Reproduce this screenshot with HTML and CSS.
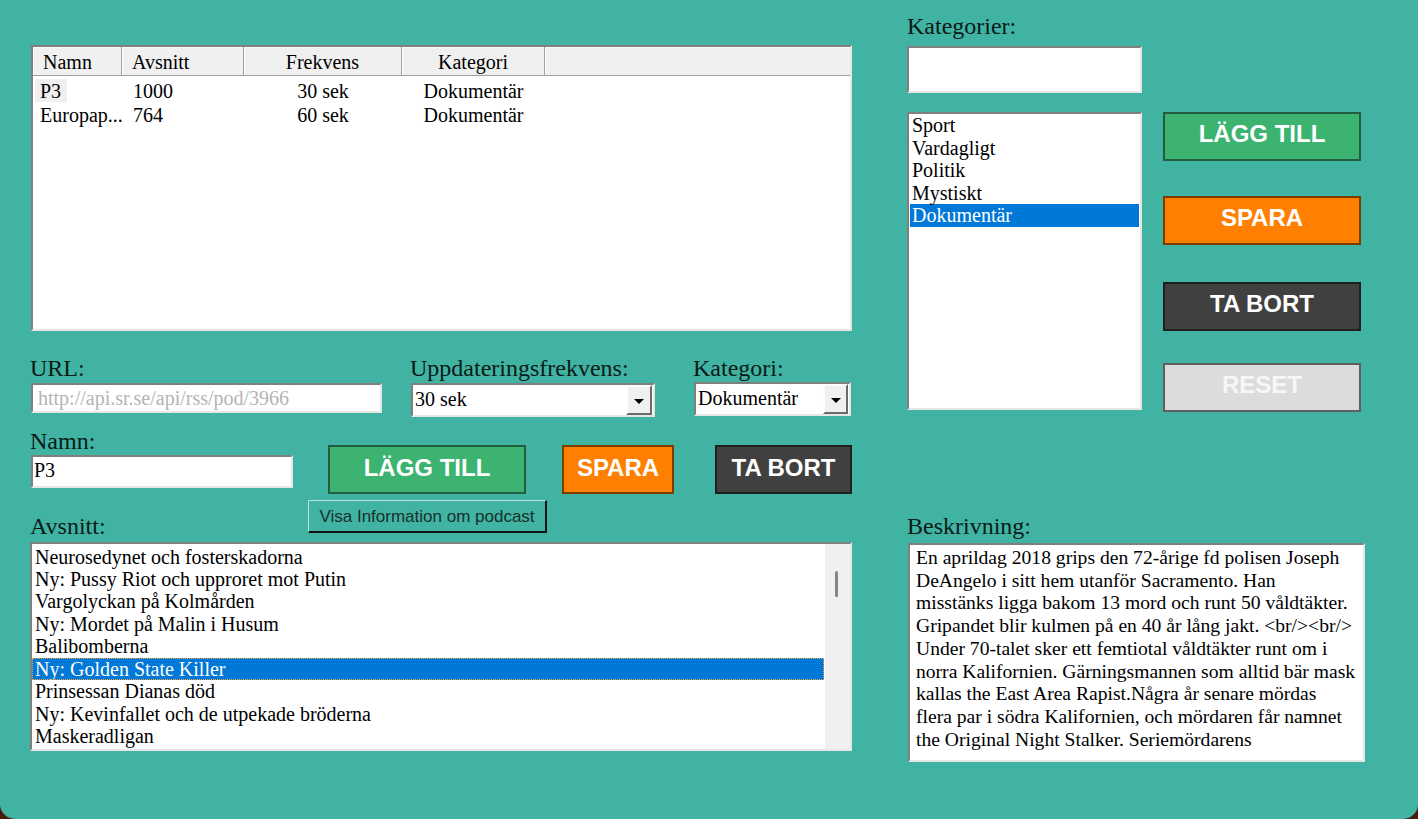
FILE: index.html
```html
<!DOCTYPE html>
<html lang="sv">
<head>
<meta charset="utf-8">
<title>Podcast</title>
<link rel="stylesheet" href="styles.css">
</head>
<body>
<div class="window">
  <div class="left">
    <div class="listview">
      <div class="lv-header">
        <div class="lv-col c-namn">Namn</div>
        <div class="lv-col c-avs">Avsnitt</div>
        <div class="lv-col c-frek center">Frekvens</div>
        <div class="lv-col c-kat center">Kategori</div>
        <div class="lv-col c-rest"></div>
      </div>
      <div class="lv-rows">
        <div class="lv-row">
          <div class="lv-cell c-namn"><span class="focus">P3</span></div>
          <div class="lv-cell c-avs">1000</div>
          <div class="lv-cell c-frek center">30 sek</div>
          <div class="lv-cell c-kat center">Dokumentär</div>
        </div>
        <div class="lv-row">
          <div class="lv-cell c-namn"><span class="plain">Europap...</span></div>
          <div class="lv-cell c-avs">764</div>
          <div class="lv-cell c-frek center">60 sek</div>
          <div class="lv-cell c-kat center">Dokumentär</div>
        </div>
      </div>
    </div>

    <div class="fields">
      <div class="field f-url">
        <div class="lbl">URL:</div>
        <div class="textbox tb-url"><span class="placeholder">http://api.sr.se/api/rss/pod/3966</span></div>
      </div>
      <div class="field f-freq">
        <div class="lbl">Uppdateringsfrekvens:</div>
        <div class="combo combo-freq"><span class="combo-text">30 sek</span><span class="combo-btn"><span class="tri"></span></span></div>
      </div>
      <div class="field f-kat">
        <div class="lbl">Kategori:</div>
        <div class="combo combo-kat"><span class="combo-text">Dokumentär</span><span class="combo-btn"><span class="tri"></span></span></div>
      </div>
    </div>

    <div class="row2">
      <div class="field f-namn">
        <div class="lbl">Namn:</div>
        <div class="textbox tb-namn">P3</div>
      </div>
      <button class="btn btn-green b-lagg">LÄGG TILL</button>
      <button class="btn btn-orange b-spara">SPARA</button>
      <button class="btn btn-dark b-tabort">TA BORT</button>
    </div>

    <div class="row3">
      <div class="lbl lbl-avsnitt">Avsnitt:</div>
      <button class="visa">Visa Information om podcast</button>
    </div>

    <div class="listbox lb-avsnitt">
      <div class="lb-items">
        <div class="item">Neurosedynet och fosterskadorna</div>
        <div class="item">Ny: Pussy Riot och upproret mot Putin</div>
        <div class="item">Vargolyckan på Kolmården</div>
        <div class="item">Ny: Mordet på Malin i Husum</div>
        <div class="item">Balibomberna</div>
        <div class="item selected focused">Ny: Golden State Killer</div>
        <div class="item">Prinsessan Dianas död</div>
        <div class="item">Ny: Kevinfallet och de utpekade bröderna</div>
        <div class="item">Maskeradligan</div>
      </div>
      <div class="scrollbar"><div class="thumb"></div></div>
    </div>
  </div>

  <div class="right">
    <div class="lbl lbl-kategorier">Kategorier:</div>
    <div class="textbox tb-kat"></div>
    <div class="cat-row">
      <div class="listbox lb-cat">
        <div class="item">Sport</div>
        <div class="item">Vardagligt</div>
        <div class="item">Politik</div>
        <div class="item">Mystiskt</div>
        <div class="item selected">Dokumentär</div>
      </div>
      <div class="cat-buttons">
        <button class="btn btn-green rb rb-lagg">LÄGG TILL</button>
        <button class="btn btn-orange rb rb-spara">SPARA</button>
        <button class="btn btn-dark rb rb-tabort">TA BORT</button>
        <button class="btn btn-reset rb rb-reset">RESET</button>
      </div>
    </div>
    <div class="lbl lbl-besk">Beskrivning:</div>
    <div class="textbox desc">En aprildag 2018 grips den 72-årige fd polisen Joseph<br>DeAngelo i sitt hem utanför Sacramento. Han<br>misstänks ligga bakom 13 mord och runt 50 våldtäkter.<br>Gripandet blir kulmen på en 40 år lång jakt. &lt;br/&gt;&lt;br/&gt;<br>Under 70-talet sker ett femtiotal våldtäkter runt om i<br>norra Kalifornien. Gärningsmannen som alltid bär mask<br>kallas the East Area Rapist.Några år senare mördas<br>flera par i södra Kalifornien, och mördaren får namnet<br>the Original Night Stalker. Seriemördarens</div>
  </div>
</div>
</body>
</html>
```

FILE: styles.css
```css
* { box-sizing: border-box; }

html { background: #4a1a0c; }

body { margin: 0; }

.window {
  width: 1418px;
  height: 819px;
  background: #41b3a3;
  border-radius: 0 0 15px 15px;
  display: flex;
  font-family: "Liberation Serif", "Times New Roman", serif;
  color: #000;
  overflow: hidden;
}

/* ---------- generic controls ---------- */
.lbl {
  font-size: 24px;
  line-height: 28px;
  height: 28px;
  color: #0a1a17;
  white-space: nowrap;
}

.textbox {
  background: #fff;
  border: 2px solid;
  border-color: #7f7f7f #e6e6e6 #e6e6e6 #7f7f7f;
  font-size: 20px;
  overflow: hidden;
  white-space: nowrap;
}

.listbox {
  background: #fff;
  border: 2px solid;
  border-color: #7f7f7f #e6e6e6 #e6e6e6 #7f7f7f;
  font-size: 20px;
  overflow: hidden;
}

.item {
  height: 22.45px;
  line-height: 22.45px;
  padding-left: 3px;
  white-space: nowrap;
}

.item.selected {
  background: #0078d7;
  color: #fff;
}

.btn {
  display: block;
  margin: 0;
  padding: 0 0 4px 0;
  height: 49px;
  font-family: "Liberation Sans", Arial, sans-serif;
  font-weight: bold;
  font-size: 24px;
  color: #fff;
  border: 2px solid;
  text-align: center;
  line-height: 28px;
}

.btn-green { background: #3cb371; border-color: #245c3f; }
.btn-orange { background: #ff8000; border-color: #7a3d00; }
.btn-dark { background: #404040; border-color: #1f1f1f; }
.btn-reset { background: #dcdcdc; border-color: #5f5f5f; color: #f7f7f7; }

/* ---------- left column ---------- */
.left {
  margin-left: 30px;
  width: 823px;
  display: flex;
  flex-direction: column;
}

.listview {
  margin-top: 45px;
  margin-left: 1px;
  width: 821px;
  height: 286px;
  background: #fff;
  border: 2px solid;
  border-color: #7f7f7f #e6e6e6 #e6e6e6 #7f7f7f;
  font-size: 20px;
}

.lv-header {
  display: flex;
  height: 29px;
  background: #f0f0f0;
  border-bottom: 1px solid #a0a0a0;
}

.lv-col {
  height: 28px;
  padding-top: 3px;
  padding-left: 10px;
  line-height: 24px;
  border-right: 1px solid #a0a0a0;
  box-shadow: inset 1px 1px 0 #fff;
  white-space: nowrap;
}

.lv-col.center { padding-left: 0; text-align: center; }

.c-namn { width: 89px; }
.c-avs { width: 122px; }
.c-frek { width: 158px; }
.c-kat { width: 143px; }
.c-rest { flex: 1; border-right: 0; }

.lv-rows { padding-top: 3px; }

.lv-row {
  display: flex;
  height: 24px;
  line-height: 24px;
  white-space: nowrap;
}

.lv-cell { overflow: hidden; }
.lv-cell.c-namn { padding-left: 2px; }
.lv-cell.c-avs { padding-left: 11px; }
.lv-cell.center { text-align: center; }

.focus {
  display: inline-block;
  background: #efefef;
  padding: 0 6px 0 5px;
  height: 23px;
}

.plain { padding-left: 5px; }

.fields {
  display: flex;
  margin-top: 23px;
  height: 63px;
}

.field { display: flex; flex-direction: column; }

.f-url { width: 380px; }
.f-freq { width: 283px; }
.f-kat { width: 160px; }

.tb-url {
  margin-top: 1px;
  margin-left: 1px;
  width: 351px;
  height: 30px;
  line-height: 26px;
  padding-left: 5px;
}

.placeholder { color: #b4b4b4; }

.combo {
  display: flex;
  background: #fff;
  border: 2px solid;
  border-color: #7f7f7f #e6e6e6 #e6e6e6 #7f7f7f;
  height: 34px;
  padding-right: 1px;
  font-size: 20px;
}

.combo-freq { margin-top: 1px; margin-left: 1px; width: 244px; }
.combo-kat { margin-left: 1px; width: 157px; }

.combo-text {
  flex: 1;
  padding-left: 2px;
  line-height: 28px;
  white-space: nowrap;
  overflow: hidden;
}

.combo-btn {
  width: 26px;
  background: #f0f0f0;
  border: 2px solid;
  border-color: #fdfdfd #6a6a6a #6a6a6a #fdfdfd;
  display: flex;
  align-items: center;
  justify-content: center;
}

.combo-kat .combo-btn { width: 25px; }

.tri {
  width: 0;
  height: 0;
  border-left: 5px solid transparent;
  border-right: 5px solid transparent;
  border-top: 5px solid #000;
  margin-top: 2px;
}

.row2 {
  display: flex;
  margin-top: 10px;
  height: 67px;
  align-items: flex-start;
}

.f-namn { width: 298px; }

.tb-namn {
  margin-left: 1px;
  width: 262px;
  height: 33px;
  line-height: 27px;
  padding-left: 1px;
}

.b-lagg { margin-top: 18px; width: 198px; }
.b-spara { margin-top: 18px; margin-left: 36px; width: 112px; }
.b-tabort { margin-top: 18px; margin-left: 41px; width: 137px; }

.row3 {
  display: flex;
  margin-top: 6px;
  height: 42px;
  align-items: flex-start;
}

.lbl-avsnitt { width: 278px; margin-top: 12px; }

.visa {
  margin: 0;
  padding: 0;
  width: 239px;
  height: 33px;
  background: #41b3a3;
  border-style: solid;
  border-width: 1px 2px 2px 1px;
  border-color: #b7e3dc #141414 #141414 #b7e3dc;
  font-family: "Liberation Sans", Arial, sans-serif;
  font-size: 17px;
  color: #17302c;
  text-align: center;
  line-height: 31px;
}

.lb-avsnitt {
  display: flex;
  width: 822px;
  height: 209px;
}

.lb-items {
  width: 792px;
  padding-top: 1.5px;
}

.item.focused { outline: 1px dotted #f2a341; outline-offset: -1px; }

.scrollbar {
  margin-left: 1px;
  width: 25px;
  background: #f0f0f0;
  padding-top: 27px;
  padding-left: 10px;
}

.thumb {
  width: 3px;
  height: 26px;
  background: #858585;
  border-radius: 2px;
}

/* ---------- right column ---------- */
.right {
  margin-left: 54px;
  width: 458px;
  display: flex;
  flex-direction: column;
}

.lbl-kategorier { margin-top: 12px; }

.tb-kat {
  margin-top: 6px;
  width: 235px;
  height: 47px;
}

.cat-row {
  display: flex;
  margin-top: 19px;
  height: 300px;
  align-items: flex-start;
}

.lb-cat {
  width: 235px;
  height: 298px;
}

.lb-cat .item { margin: 0 1px; padding-left: 2px; height: 22.5px; line-height: 22.5px; }

.cat-buttons {
  margin-left: 21px;
  width: 198px;
  display: flex;
  flex-direction: column;
}

.rb { width: 198px; padding-bottom: 6px; }
.rb-spara { margin-top: 35px; }
.rb-tabort { margin-top: 37px; }
.rb-reset { margin-top: 32px; }

.lbl-besk { margin-top: 100px; }

.desc {
  margin-top: 3px;
  margin-left: 1px;
  width: 457px;
  height: 219px;
  padding: 2px 6px 0 6px;
  font-size: 19.6px;
  line-height: 22.7px;
  white-space: nowrap;
}
```
